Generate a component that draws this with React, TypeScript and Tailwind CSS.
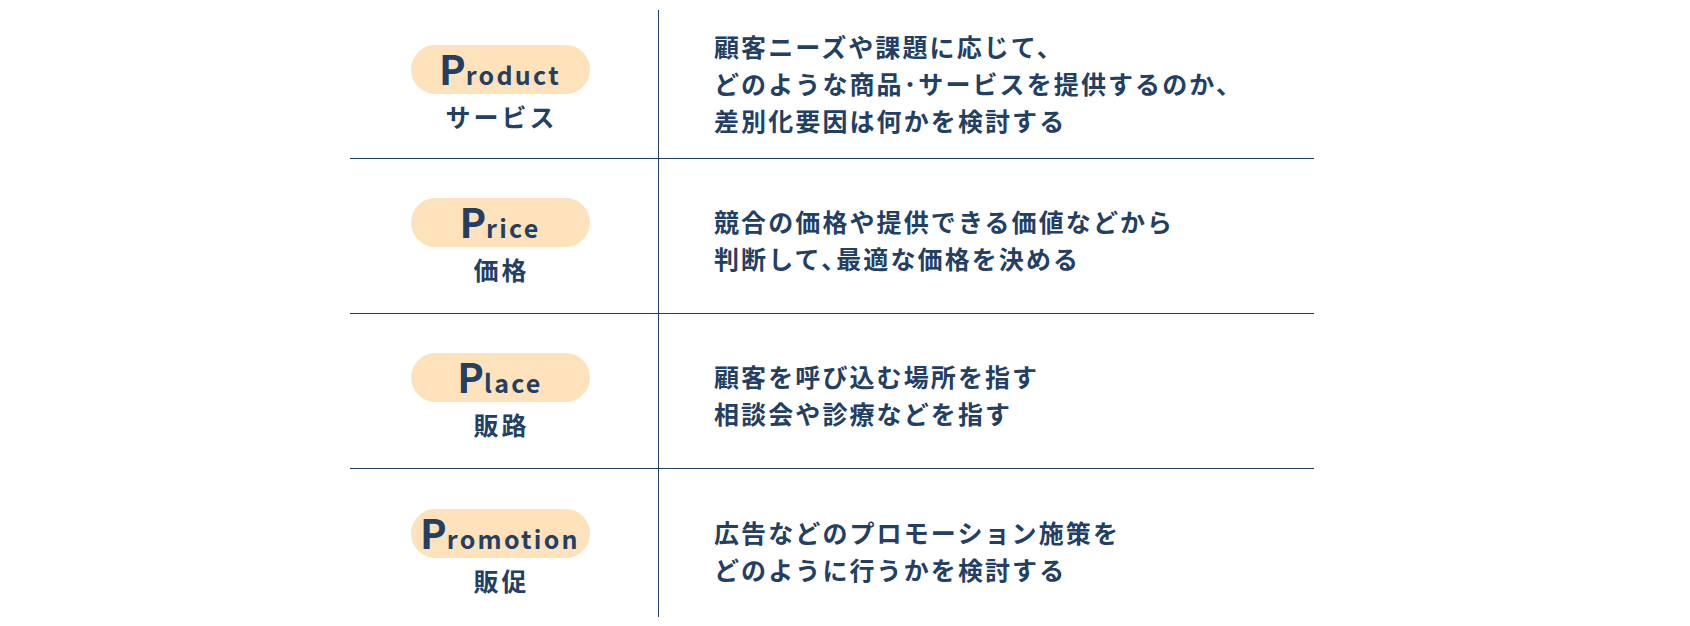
const rows = [
  {
    en: 'roduct',
    ja: 'サービス',
    text: ['顧客ニーズや課題に応じて、', 'どのような商品･サービスを提供するのか、', '差別化要因は何かを検討する'],
  },
  {
    en: 'rice',
    ja: '価格',
    text: ['競合の価格や提供できる価値などから', '判断して､最適な価格を決める'],
  },
  {
    en: 'lace',
    ja: '販路',
    text: ['顧客を呼び込む場所を指す', '相談会や診療などを指す'],
  },
  {
    en: 'romotion',
    ja: '販促',
    text: ['広告などのプロモーション施策を', 'どのように行うかを検討する'],
  },
];

export default function App() {
  return (
    <div
      className="w-[1690px] h-[626px] bg-white pt-[4px] pl-[350px] text-[#243f64]"
      style={{ fontFamily: '"Noto Sans CJK JP", "Noto Sans", sans-serif' }}
    >
      <div className="w-[964px] flex flex-col">
        {rows.map((row, i) => (
          <div
            key={row.ja}
            className={`flex h-[155px] ${i < rows.length - 1 ? 'border-b border-[#243f64]' : ''}`}
          >
            <div
              className={`w-[308px] pr-[8px] flex flex-col items-center justify-center ${i === 0 ? 'pt-[14px]' : 'pt-[10px]'}`}
            >
              <div className="w-[179px] h-[49px] rounded-full bg-[#fde2bb] flex items-end justify-center pb-[6px] font-bold leading-none">
                <span className="text-[40px] leading-none">P</span>
                <span className="text-[25px] leading-none tracking-[0.09em] mb-[1px]">{row.en}</span>
              </div>
              <div className="mt-[7px] text-[25px] leading-[30px] font-bold tracking-[3px] pl-[3px]">{row.ja}</div>
            </div>
            <div
              className={`w-px bg-[#243f64] ${i === 0 ? 'mt-[6px]' : ''} ${i === rows.length - 1 ? 'mb-[7px]' : ''}`}
            />
            <div
              className={`flex-1 pl-[55px] flex flex-col justify-center ${i === 0 ? 'pt-[4px]' : 'pt-[8px]'}`}
            >
              {row.text.map((line) => (
                <div key={line} className="text-[25px] leading-[37px] font-bold tracking-[2.1px] whitespace-nowrap">
                  {line}
                </div>
              ))}
            </div>
          </div>
        ))}
      </div>
    </div>
  );
}
